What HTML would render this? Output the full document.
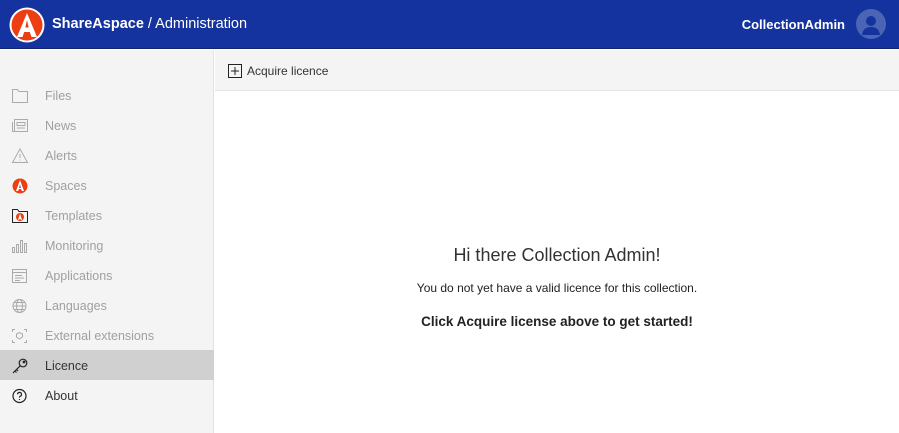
<!DOCTYPE html>
<html><head><meta charset="utf-8"><style>
*{margin:0;padding:0;box-sizing:border-box}
body{width:899px;height:433px;overflow:hidden;font-family:"Liberation Sans",sans-serif;background:#fff;position:relative}
.hdr{position:absolute;left:0;top:0;width:899px;height:49px;background:#15339e;color:#fff;border-bottom:1px solid #0e2570}
.logo{position:absolute;left:9px;top:7px;width:36px;height:36px}
.title{position:absolute;left:52px;top:16px;font-size:14.5px}
.user{position:absolute;right:54px;top:17px;font-size:13px;font-weight:bold}
.av{position:absolute;left:856px;top:9px;width:30px;height:30px;border-radius:50%;background:#4a64b6;overflow:hidden}
.side{position:absolute;left:0;top:50px;width:214px;height:383px;background:#f4f4f4;border-right:1px solid #e2e2e2}
.item{position:absolute;left:0;width:214px;height:30px;font-size:12.5px;color:#a0a0a0}
.item span{position:absolute;left:45px;top:9px}
.item svg{position:absolute;left:11px;top:8px}
.sel{background:#d0d0d0}
.dark{color:#333}
.tb{position:absolute;left:215px;top:50px;width:684px;height:41px;background:#f4f4f4;border-bottom:1px solid #e4e4e4;font-size:12px;color:#333}
.main{position:absolute;left:215px;top:91px;width:684px;text-align:center;color:#222}
</style></head><body>
<div class="hdr">
<svg class="logo" viewBox="0 0 36 36"><circle cx="18" cy="18" r="17.5" fill="#fff"/><circle cx="18" cy="18" r="15.5" fill="#ec3d13"/><path d="M18 6 L28 30 H22.5 L20.8 25 H15.2 L13.5 30 H8 Z M18 13 L16.3 20.5 H19.7 Z" fill="#fff"/></svg>
<div class="title"><b>ShareAspace</b> / Administration</div>
<div class="user">CollectionAdmin</div>
<div class="av"><svg width="30" height="30" viewBox="0 0 30 30"><circle cx="15" cy="12" r="5" fill="#15339e"/><path d="M6 26 Q7 18 15 18 Q23 18 24 26 Z" fill="#15339e"/></svg></div>
</div>
<div class="side">
<div class="item" style="top:30px"><svg width="18" height="16" viewBox="0 0 18 16" fill="none" stroke="#aaa"><path d="M1.5 1.5h5l1.5 2h8.5v11h-15z"/></svg><span>Files</span></div>
<div class="item" style="top:60px"><svg width="18" height="16" viewBox="0 0 18 16" fill="none" stroke="#aaa"><rect x="3.5" y="1.5" width="13" height="12"/><path d="M1.5 4v9.5h2M6 4.5h8v3H6zM6 10h8"/></svg><span>News</span></div>
<div class="item" style="top:90px"><svg width="18" height="16" viewBox="0 0 18 16" fill="none" stroke="#aaa"><path d="M9 1L16.5 14.5h-15z M9 6v4 M9 11.5v1"/></svg><span>Alerts</span></div>
<div class="item" style="top:120px"><svg width="18" height="16" viewBox="0 0 18 16"><circle cx="9" cy="8" r="7.5" fill="#ec3d13"/><path d="M9 2L13 13H11L10 11H8L7 13H5Z" fill="#fff"/><path d="M9 6L8.3 10h1.4z" fill="#15339e"/></svg><span>Spaces</span></div>
<div class="item" style="top:150px"><svg width="18" height="16" viewBox="0 0 18 16"><path d="M1.5 1.5h5l1.5 2h8.5v11h-15z" fill="none" stroke="#222"/><circle cx="9" cy="9" r="4" fill="#ec3d13"/><path d="M9 5.5L11 12H10L9.5 11H8.5L8 12H7Z" fill="#fff"/></svg><span>Templates</span></div>
<div class="item" style="top:180px"><svg width="18" height="16" viewBox="0 0 18 16" fill="none" stroke="#aaa"><rect x="1.5" y="9.5" width="2" height="5"/><rect x="5.5" y="6.5" width="2" height="8"/><rect x="9.5" y="2.5" width="2" height="12"/><rect x="13.5" y="5.5" width="2" height="9"/></svg><span>Monitoring</span></div>
<div class="item" style="top:210px"><svg width="18" height="16" viewBox="0 0 18 16" fill="none" stroke="#aaa"><rect x="1.5" y="1.5" width="14" height="13"/><path d="M1.5 4.5h14M4 7.5h7M4 10h9M4 12.5h5"/></svg><span>Applications</span></div>
<div class="item" style="top:240px"><svg width="18" height="16" viewBox="0 0 18 16" fill="none" stroke="#aaa"><circle cx="8.5" cy="8" r="6.5"/><ellipse cx="8.5" cy="8" rx="3" ry="6.5"/><path d="M2 8h13M3 4.5h11M3 11.5h11"/></svg><span>Languages</span></div>
<div class="item" style="top:270px"><svg width="18" height="16" viewBox="0 0 18 16" fill="none" stroke="#aaa"><path d="M1.5 4V1.5H4M13 1.5h2.5V4M15.5 12v2.5H13M4 14.5H1.5V12"/><path d="M5.5 6l3-1.5 3 1.5v3l-3 2-3-2z"/></svg><span>External extensions</span></div>
<div class="item sel dark" style="top:300px"><svg width="18" height="16" viewBox="0 0 18 16" fill="none" stroke="#222" stroke-width="1.2"><circle cx="12" cy="5" r="3.8"/><circle cx="13" cy="4" r="0.8"/><path d="M9.3 7.7L2 15M4 13l1.5 1.5M5.5 11.5L7 13"/></svg><span>Licence</span></div>
<div class="item dark" style="top:330px"><svg width="18" height="16" viewBox="0 0 18 16" fill="none" stroke="#222" stroke-width="1.2"><circle cx="8.5" cy="8" r="6.5"/><path d="M6.5 6.3a2 2 0 1 1 2.5 2c-.5.2-.5.7-.5 1.3"/><path d="M8.5 11v1"/></svg><span>About</span></div>
</div>
<div class="tb"><svg style="position:absolute;left:13px;top:14px" width="14" height="14" viewBox="0 0 14 14" fill="none" stroke="#222"><rect x="0.5" y="0.5" width="13" height="13"/><path d="M7 3v8M3 7h8"/></svg><span style="position:absolute;left:32px;top:14px">Acquire licence</span></div>
<div class="main">
<div style="position:absolute;left:0;width:684px;top:154px;font-size:18px;color:#333">Hi there Collection Admin!</div>
<div style="position:absolute;left:0;width:684px;top:190px;font-size:12px;color:#222">You do not yet have a valid licence for this collection.</div>
<div style="position:absolute;left:0;width:684px;top:223px;font-size:13.5px;font-weight:bold;color:#222">Click Acquire license above to get started!</div>
</div>
</body></html>
